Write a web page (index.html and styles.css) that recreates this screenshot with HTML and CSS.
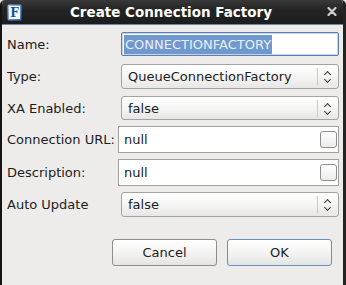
FILE: index.html
```html
<!DOCTYPE html>
<html lang="en">
<head>
    <meta charset="UTF-8">
    <title>Create Connection Factory</title>
    <link rel="stylesheet" href="styles.css">
</head>
<body>
    <div class="window">
        <!-- Title bar -->
        <div class="titlebar">
            <span class="app-icon">
                <svg width="15" height="17" viewBox="0 0 15 17">
                    <defs>
                        <linearGradient id="ig" x1="0" y1="0" x2="1" y2="1">
                            <stop offset="0" stop-color="#9cc6f0"/>
                            <stop offset="1" stop-color="#2f6fb8"/>
                        </linearGradient>
                    </defs>
                    <rect x="0.5" y="0.5" width="14" height="16" rx="1.5" fill="url(#ig)"/>
                    <rect x="2" y="2" width="11" height="13" fill="#f4f8fc"/>
                    <text x="7.5" y="13" text-anchor="middle" font-family="DejaVu Serif, serif" font-weight="bold" font-size="12" fill="#1d4f8f">F</text>
                </svg>
            </span>
            <span class="title">Create Connection Factory</span>
            <span class="close">
                <svg width="10" height="9" viewBox="0 0 10 9">
                    <path d="M1.5 1 L8.5 8 M8.5 1 L1.5 8" stroke="#cfcfcf" stroke-width="2.2" stroke-linecap="round"/>
                </svg>
            </span>
        </div>

        <!-- Dialog content -->
        <div class="dialog">
            <div class="form">
                <div class="row row-name">
                    <label>Name:</label>
                    <div class="entry focused"><span class="selected">CONNECTIONFACTORY</span></div>
                </div>
                <div class="row row-type">
                    <label>Type:</label>
                    <div class="combo"><span class="value">QueueConnectionFactory</span><span class="arrows"></span></div>
                </div>
                <div class="row row-xa">
                    <label>XA Enabled:</label>
                    <div class="combo"><span class="value">false</span><span class="arrows"></span></div>
                </div>
                <div class="row row-text">
                    <label>Connection URL:</label>
                    <div class="text-entry"><span class="value">null</span><span class="check"></span></div>
                </div>
                <div class="row row-text">
                    <label>Description:</label>
                    <div class="text-entry"><span class="value">null</span><span class="check"></span></div>
                </div>
                <div class="row row-auto">
                    <label>Auto Update</label>
                    <div class="combo"><span class="value">false</span><span class="arrows"></span></div>
                </div>
            </div>

            <div class="buttons">
                <button class="btn">Cancel</button>
                <button class="btn default">OK</button>
            </div>
        </div>
    </div>
</body>
</html>
```

FILE: styles.css
```css
* {
    margin: 0;
    padding: 0;
    box-sizing: border-box;
}

html, body {
    background: #e4e4e4;
}

body {
    font-family: "DejaVu Sans", sans-serif;
    font-size: 13px;
    color: #1c1c1c;
}

.window {
    width: 346px;
    height: 285px;
    display: flex;
    flex-direction: column;
    background: #edeceb;
    border-left: 2px solid #141414;
    border-right: 3px solid #232323;
    border-radius: 5px 5px 0 0;
    overflow: hidden;
}

/* Title bar */
.titlebar {
    height: 25px;
    flex: none;
    display: grid;
    grid-template-columns: 30px 1fr 30px;
    align-items: center;
    background: linear-gradient(#393939, #242424 40%, #1d1d1d);
    border-bottom: 1px solid #6d87a8;
    margin: 0 -3px 0 -2px;
}

.app-icon {
    display: flex;
    padding-left: 7px;
    padding-top: 1px;
}

.title {
    text-align: center;
    color: #ffffff;
    font-weight: bold;
    font-size: 13.5px;
    padding-right: 4px;
}

.close {
    display: flex;
    justify-content: flex-end;
    padding-right: 9px;
    padding-bottom: 1px;
}

/* Dialog body */
.dialog {
    flex: 1;
    padding: 7px 4px 0 5px;
}

.row {
    display: flex;
    align-items: center;
}

.row label {
    width: 111px;
    flex: none;
}

.row-name { height: 24px; margin-bottom: 8px; }
.row-type { height: 25px; margin-bottom: 7px; }
.row-xa { height: 24px; margin-bottom: 6px; }
.row-text { height: 27px; margin-bottom: 6px; }
.row-auto { height: 25px; }

.entry {
    flex: 1;
    height: 100%;
    margin-left: 3px;
    display: flex;
    align-items: center;
    padding-left: 2px;
    background: #ffffff;
    border: 1px solid #9a9a9a;
    border-radius: 2px;
}

.entry.focused {
    border-color: #5b7fb0;
    box-shadow: inset 0 0 0 1px #c5d6ec;
}

.selected {
    background: #6f98cd;
    color: #e9eff8;
    padding: 2px 1px;
    line-height: 15px;
}

.combo {
    flex: 1;
    height: 100%;
    margin-left: 3px;
    display: flex;
    align-items: center;
    padding-left: 6px;
    background: linear-gradient(#ffffff, #f3f3f2 60%, #e6e6e5);
    border: 1px solid #a3a3a2;
    border-radius: 3px;
}

.combo .value {
    flex: 1;
}

.arrows {
    width: 21px;
    height: 17px;
    border-left: 1px solid #c8c8c8;
    position: relative;
}

.arrows::before,
.arrows::after {
    content: "";
    position: absolute;
    left: 7px;
    width: 4px;
    height: 4px;
    border-left: 1.5px solid #3a3a3a;
    border-top: 1.5px solid #3a3a3a;
}

.arrows::before {
    top: 4px;
    transform: rotate(45deg);
}

.arrows::after {
    top: 9px;
    transform: rotate(225deg);
}

.text-entry {
    flex: 1;
    height: 100%;
    display: flex;
    align-items: center;
    padding: 0 1px 0 5px;
    background: #ffffff;
    border: 1px solid #a0a0a0;
}

.text-entry .value {
    flex: 1;
}

.check {
    width: 17px;
    height: 17px;
    border: 1px solid #8f8f8f;
    border-radius: 3px;
    background: linear-gradient(#ffffff, #ececec);
}

/* Buttons */
.buttons {
    display: flex;
    justify-content: flex-end;
    gap: 10px;
    margin-top: 22px;
    padding-right: 7px;
}

.btn {
    width: 105px;
    height: 27px;
    font-family: "DejaVu Sans", sans-serif;
    font-size: 13px;
    color: #1c1c1c;
    background: linear-gradient(#ffffff, #f1f1f0 60%, #e4e4e3);
    border: 1px solid #8e8e8e;
    border-radius: 3px;
}

.btn.default {
    border-color: #6a8fc4;
}
```
